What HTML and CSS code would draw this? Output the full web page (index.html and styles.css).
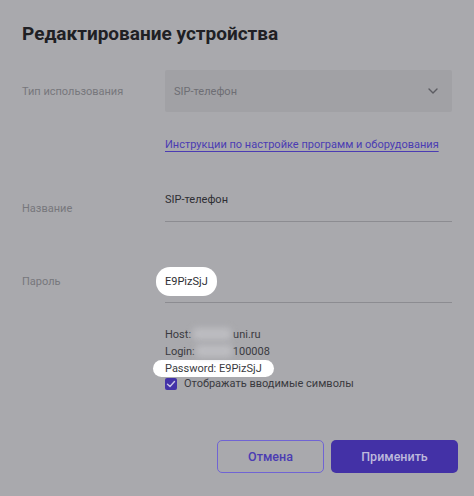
FILE: index.html
```html
<!DOCTYPE html>
<html lang="ru">
<head>
    <meta charset="utf-8">
    <title>Редактирование устройства</title>
    <link rel="stylesheet" href="styles.css">
</head>
<body>
    <main class="modal">
        <h1 class="title">Редактирование устройства</h1>

        <div class="row row-type">
            <div class="label">Тип использования</div>
            <div class="select">
                <span>SIP-телефон</span>
                <svg class="chevron" width="12" height="12" viewBox="0 0 12 12">
                    <path d="M2 4 L6 8 L10 4" fill="none" stroke="#5c5c62" stroke-width="1.4" stroke-linecap="round" stroke-linejoin="round"/>
                </svg>
            </div>
        </div>

        <div class="row row-link">
            <div class="label"></div>
            <a class="link" href="#">Инструкции по настройке программ и оборудования</a>
        </div>

        <div class="row row-name">
            <div class="label">Название</div>
            <div class="field">
                <span class="value">SIP-телефон</span>
            </div>
        </div>

        <div class="row row-pass">
            <div class="label">Пароль</div>
            <div class="field">
                <span class="value spot">E9PizSjJ</span>
            </div>
        </div>

        <div class="row row-info">
            <div class="label"></div>
            <div class="info">
                <div class="line">Host:<span class="blur b1"></span>uni.ru</div>
                <div class="line">Login:<span class="blur b2"></span>100008</div>
                <div class="line"><span class="spot spot-sm">Password: E9PizSjJ</span></div>
                <label class="check">
                    <span class="box">
                        <svg width="12" height="12" viewBox="0 0 12 12">
                            <path d="M2.5 6.2 L5 8.5 L9.5 3.5" fill="none" stroke="#c9c5e6" stroke-width="1.4" stroke-linecap="round" stroke-linejoin="round"/>
                        </svg>
                    </span>
                    Отображать вводимые символы
                </label>
            </div>
        </div>

        <div class="actions">
            <button class="btn btn-cancel">Отмена</button>
            <button class="btn btn-apply">Применить</button>
        </div>
    </main>
</body>
</html>
```

FILE: styles.css
```css
body {
    margin: 0;
    background-color: #a9a9ad;
    font-family: "Roboto", "Noto Sans", sans-serif;
    color: #2e2e33;
}

.modal {
    width: 474px;
    height: 496px;
    box-sizing: border-box;
    padding: 22px 22px 0 22px;
}

.title {
    margin: 0;
    font-size: 19px;
    font-weight: 700;
    line-height: 24px;
    color: #202024;
}

.row {
    display: grid;
    grid-template-columns: 143px 287px;
    align-items: center;
}

.label {
    font-size: 11px;
    color: #77777c;
}

.row-type {
    margin-top: 24px;
}

.select {
    height: 42px;
    background-color: #a1a1a5;
    border-radius: 2px;
    display: flex;
    align-items: center;
    justify-content: space-between;
    padding: 0 13px 0 9px;
    font-size: 11px;
    color: #6e6e74;
}

.row-link {
    margin-top: 26px;
}

.link {
    font-size: 11px;
    color: #4b3cb3;
    white-space: nowrap;
    text-decoration: underline;
    text-underline-offset: 3px;
}

.row-name {
    margin-top: 31px;
}

.row-name .label {
    padding-top: 12px;
}

.field {
    border-bottom: 1px solid #8c8c91;
    height: 35px;
    display: flex;
    align-items: center;
}

.row-name .field {
    padding-bottom: 4px;
}

.value {
    font-size: 11px;
    color: #2e2e33;
}

.row-pass {
    margin-top: 38px;
}

.row-pass .field {
    height: 42px;
    padding-bottom: 0;
}

.spot {
    background-color: #ffffff;
    border-radius: 14px;
    padding: 8px 9px;
    margin-left: -9px;
}

.spot-sm {
    border-radius: 9px;
    padding: 2px 12px;
    margin-left: -12px;
}

.row-info {
    margin-top: 23px;
}

.info {
    font-size: 11px;
    color: #3a3a40;
    line-height: 17px;
}

.blur {
    display: inline-block;
    height: 12px;
    vertical-align: -2px;
    background-color: #bdbdc1;
    filter: blur(3px);
    border-radius: 3px;
}

.b1 {
    width: 38px;
    margin: 0 2px;
}

.b2 {
    width: 36px;
    margin: 0 1px;
}

.check {
    display: flex;
    align-items: center;
    gap: 7px;
    margin-top: -2px;
}

.box {
    width: 12px;
    height: 12px;
    background-color: #4332a8;
    border-radius: 2px;
    display: flex;
}

.actions {
    display: flex;
    justify-content: flex-end;
    gap: 7px;
    margin-top: 48px;
    margin-right: -6px;
}

.btn {
    height: 33px;
    border-radius: 5px;
    font-family: "Roboto", "Noto Sans", sans-serif;
    font-size: 12.5px;
    font-weight: 500;
}

.btn-cancel {
    width: 107px;
    background-color: transparent;
    border: 1px solid #7064d4;
    color: #4b3cb3;
}

.btn-apply {
    width: 127px;
    background-color: #4331a6;
    border: none;
    color: #bdb9dc;
}
```
